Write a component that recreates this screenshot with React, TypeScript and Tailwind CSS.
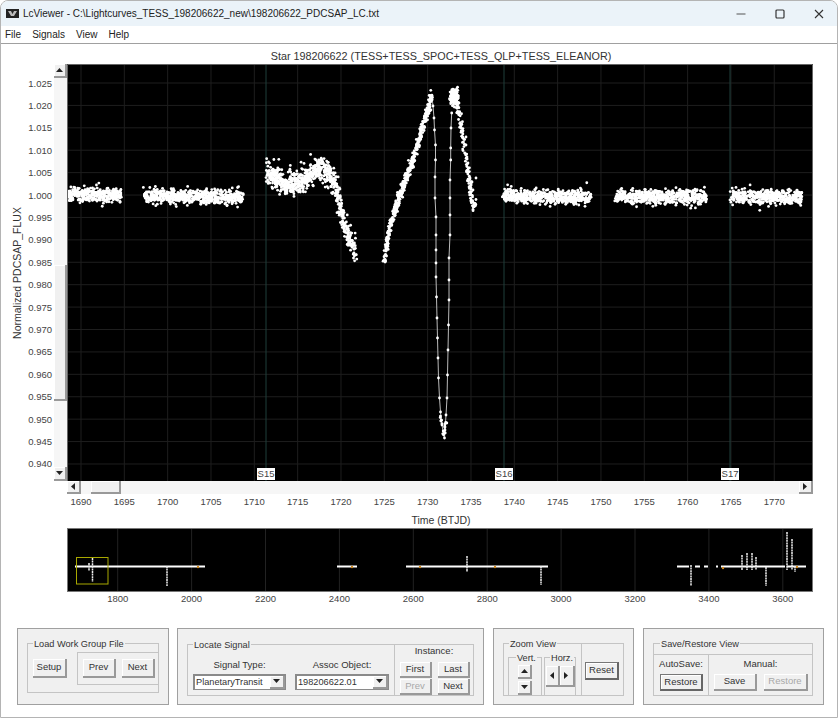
import type { ReactNode } from 'react';

type Pt = [number, number];

// small seeded generator so the star field stays the same on every render
let seed = 198206;
function rnd() {
  seed = (seed * 1664525 + 1013904223) % 4294967296;
  return seed / 4294967296;
}
function gauss() {
  return (rnd() + rnd() + rnd() + rnd() - 2) * 1.7;
}

function interp(line: Pt[], x: number) {
  for (let i = 0; i < line.length - 1; i++) {
    if (x >= line[i][0] && x <= line[i + 1][0]) {
      const t = (x - line[i][0]) / (line[i + 1][0] - line[i][0] || 1);
      return line[i][1] + (line[i + 1][1] - line[i][1]) * t;
    }
  }
  return line[line.length - 1][1];
}

function band(line: Pt[], sigma: number, perPx: number): Pt[] {
  const out: Pt[] = [];
  const start = line[0][0];
  const end = line[line.length - 1][0];
  const n = Math.round((end - start) * perPx);
  for (let i = 0; i < n; i++) {
    const x = start + rnd() * (end - start);
    // a few points stray further out, as in the real photometry
    const s = rnd() < 0.06 ? sigma * 1.9 : sigma;
    out.push([x + gauss() * 0.7, interp(line, x) + gauss() * s]);
  }
  return out;
}

const FLAT: Pt[][] = [
  [[68, 195], [121, 195]],
  [[144, 196], [243, 197]],
  [[503, 196], [591, 197]],
  [[616, 197], [707, 197]],
  [[730, 196], [802, 197]],
];

const HUMP: Pt[] = [
  [266, 172], [272, 174], [283, 184], [298, 184], [308, 176], [320, 167], [330, 174], [336, 188],
];
const HUMP_TAIL: Pt[] = [[336, 188], [341, 212], [347, 232], [351, 246], [356, 250]];

const RISE: Pt[] = [
  [384, 263], [390, 225], [403, 187], [413, 160], [423, 127], [432, 97],
];

const FALL: Pt[] = [
  [432, 97], [433, 106], [434, 118], [434.5, 130], [435.5, 145], [435.5, 160], [435, 177], [435, 198],
  [436, 217], [436, 235], [436, 250], [436, 263], [436, 277], [436.5, 297], [437, 318], [437.5, 338],
  [438, 358], [438.5, 378], [439.5, 398], [440.5, 412], [442, 425], [443.5, 434], [444.5, 438], [445, 430],
  [446, 415], [447, 398], [447.5, 375], [448, 350], [448.5, 325], [449, 300], [449, 280], [449, 258],
  [450, 235], [450, 215], [450, 198], [450, 180], [450.7, 160], [450.7, 148], [451, 128], [451.7, 113],
];

const LOBE: Pt[] = [
  [459, 112], [461, 125], [464, 142], [466, 157], [468, 173], [471, 192], [473, 205], [475, 204],
];
const LOBE_TOP: Pt[] = [[450, 98], [453, 96], [456, 97], [459, 104]];
const BOTTOM: Pt[] = [[440, 415], [444, 434], [446, 420]];

const plotDots: Pt[] = [
  ...FLAT.flatMap((s) => band(s, 3.4, 6)),
  ...band(HUMP, 5.8, 8),
  ...band(HUMP_TAIL, 6.5, 8),
  ...band(RISE, 3, 9),
  ...FALL,
  ...band(LOBE, 3.8, 7),
  ...band(LOBE_TOP, 4.6, 14),
  ...band(BOTTOM, 1.2, 3),
  [476, 178], [473, 190], [466, 137], [466, 145],
];

const OVERVIEW_FLAT: Pt[] = [
  [75, 205], [337, 357], [406, 548], [677, 689], [695, 700], [704, 708], [716, 718], [721, 785], [787, 806],
];
const OVERVIEW_SPIKES: [number, number, number][] = [
  [92.5, 558, 582], [89, 563, 571], [167, 566, 586], [467, 556, 572], [541, 566, 585],
  [691, 565, 586], [742, 555, 570], [747, 553, 570], [752, 553, 570], [756, 557, 570],
  [766, 567, 586], [787, 532, 570], [792, 539, 570], [795, 566, 572],
];
const OVERVIEW_ORANGE: Pt[] = [[198, 567], [352, 567], [420, 567], [495, 567], [723, 568], [797, 567]];

const YTICKS = Array.from({ length: 18 }, (_, i) => ({ y: 83 + i * 22.41, label: (1.025 - i * 0.005).toFixed(3) }));
const XTICKS = Array.from({ length: 17 }, (_, i) => ({ x: 81 + i * 43.33, label: String(1690 + i * 5) }));
const OTICKS = Array.from({ length: 10 }, (_, i) => ({ x: 117.7 + i * 73.9, label: String(1800 + i * 200) }));
const SECTORS = [
  { name: 'S15', x: 266 },
  { name: 'S16', x: 504 },
  { name: 'S17', x: 730 },
];

function Tri({ dir }: { dir: 'up' | 'down' | 'left' | 'right' }) {
  const pts = {
    up: '3.5,1 7,5 0,5',
    down: '0,1 7,1 3.5,5',
    left: '1,3.5 5,0 5,7',
    right: '1,0 5,3.5 1,7',
  }[dir];
  return (
    <svg width="7" height="7" viewBox="0 0 7 7" className="block">
      <polygon points={pts} fill="#222" />
    </svg>
  );
}

function Btn({ className, label, disabled, isDefault, children }: {
  className: string;
  label?: string;
  disabled?: boolean;
  isDefault?: boolean;
  children?: ReactNode;
}) {
  const look = isDefault
    ? 'border border-[#777] border-r-2 border-b-2 border-r-[#666] border-b-[#666] shadow-[inset_1px_1px_0_#fff]'
    : 'border-r-2 border-b-2 border-[#999] shadow-[inset_1px_1px_0_#fff]';
  return (
    <div className={`flex items-center justify-center bg-[#f0f0f0] text-[9.5px] shrink-0 ${look} ${disabled ? 'text-[#a8a8a8]' : 'text-[#333]'} ${className}`}>
      {label}
      {children}
    </div>
  );
}

function Select({ value, className }: { value: string; className: string }) {
  return (
    <div className={`flex h-[16px] items-stretch bg-white border border-[#8a8a8a] border-t-2 border-l-2 ${className}`}>
      <span className="flex-1 pl-[1px] text-[9.2px] leading-[13px] text-[#333] whitespace-nowrap">{value}</span>
      <Btn className="w-[15px]">
        <Tri dir="down" />
      </Btn>
    </div>
  );
}

function Legend({ text, className }: { text: string; className: string }) {
  return <span className={`absolute bg-[#f0f0f0] px-[1px] text-[9.2px] leading-[12px] text-[#333] whitespace-nowrap ${className}`}>{text}</span>;
}

function Panel({ className, children }: { className: string; children: ReactNode }) {
  return <div className={`h-[77px] shrink-0 border border-[#a0a0a0] bg-[#f0f0f0] ${className}`}>{children}</div>;
}

function PlotSvg() {
  return (
    <svg width="746" height="417" viewBox="67 64 746 417" className="block">
      <rect x="67" y="64" width="746" height="417" fill="#000" />
      {XTICKS.map((t) => (
        <line key={t.label} x1={t.x} x2={t.x} y1="64" y2="481" stroke="#1e1e1e" />
      ))}
      {YTICKS.map((t) => (
        <line key={t.label} x1="67" x2="813" y1={t.y} y2={t.y} stroke="#1e1e1e" />
      ))}
      {SECTORS.map((s) => (
        <line key={s.name} x1={s.x} x2={s.x} y1="64" y2="481" stroke="#1f3f3a" />
      ))}
      <polyline points={FALL.map((p) => p.join(',')).join(' ')} fill="none" stroke="#bbb" strokeWidth="1" />
      {plotDots.map((p, i) => (
        <circle key={i} cx={p[0]} cy={p[1]} r="1.4" fill="#fff" />
      ))}
      <path d="M67.5 481V64.5H812.5V481" fill="none" stroke="#666" />
    </svg>
  );
}

function OverviewSvg() {
  return (
    <svg width="746" height="64" viewBox="67 528 746 64" className="block">
      <rect x="67" y="528" width="746" height="64" fill="#000" />
      {OTICKS.map((t) => (
        <line key={t.label} x1={t.x} x2={t.x} y1="528" y2="592" stroke="#222" />
      ))}
      {OVERVIEW_FLAT.map(([a, b]) => (
        <line key={a} x1={a} x2={b} y1="566.5" y2="566.5" stroke="#fff" strokeWidth="2" />
      ))}
      {OVERVIEW_SPIKES.map(([x, a, b]) => (
        <line key={x} x1={x} x2={x} y1={a} y2={b} stroke="#eee" strokeWidth="1.5" strokeDasharray="2 0.6" />
      ))}
      {OVERVIEW_ORANGE.map(([x, y]) => (
        <circle key={x} cx={x} cy={y} r="1.2" fill="#d08a20" />
      ))}
      <rect x="76.5" y="557.5" width="31.5" height="26.5" fill="none" stroke="#a8a800" />
      <rect x="67.5" y="528.5" width="745" height="63" fill="none" stroke="#777" />
    </svg>
  );
}

export default function App() {
  return (
    <div className="w-[839px] h-[720px] bg-white font-['Liberation_Sans',sans-serif] overflow-hidden">
      <div className="w-[838px] h-[718px] border border-[#b4b4b4] rounded-t-lg overflow-hidden flex flex-col">
        {/* title bar */}
        <div className="h-[25px] shrink-0 bg-[#ebf3f9] flex items-center pl-[5px]">
          <svg width="13" height="9" viewBox="0 0 13 9" className="block mr-[4px]">
            <rect width="13" height="9" fill="#222" />
            <path d="M2 2h3l1.5 3L8 2h3L8 7H5z" fill="#bbb" />
          </svg>
          <span className="text-[10px] text-[#222] whitespace-nowrap">LcViewer - C:\Lightcurves_TESS_198206622_new\198206622_PDCSAP_LC.txt</span>
          <div className="ml-auto flex items-center gap-[29px] pr-[13px]">
            <svg width="10" height="10" viewBox="0 0 10 10"><path d="M0.5 5H9.5" stroke="#555" strokeWidth="1.2" /></svg>
            <svg width="10" height="10" viewBox="0 0 10 10"><rect x="1" y="1" width="8" height="8" rx="1" fill="none" stroke="#333" strokeWidth="1.2" /></svg>
            <svg width="10" height="10" viewBox="0 0 10 10"><path d="M1 1L9 9M9 1L1 9" stroke="#333" strokeWidth="1.1" /></svg>
          </div>
        </div>

        {/* menu */}
        <div className="h-[18px] shrink-0 flex items-center pl-[4px] gap-[11px] border-b border-[#a0a0a0] text-[10px] text-[#222]">
          <span>File</span>
          <span>Signals</span>
          <span>View</span>
          <span>Help</span>
        </div>

        <div className="h-[20px] shrink-0 pt-[4px] pl-[66px] w-[814px] flex items-center justify-center text-[10.8px] text-[#333] whitespace-nowrap">
          Star 198206622 (TESS+TESS_SPOC+TESS_QLP+TESS_ELEANOR)
        </div>

        {/* main plot row */}
        <div className="flex h-[417px] shrink-0">
          <svg width="53" height="417" viewBox="1 64 53 417" className="block">
            <text x="21" y="273" textAnchor="middle" transform="rotate(-90 21 273)" fontSize="10.5" fill="#333">Normalized PDCSAP_FLUX</text>
            {YTICKS.map((t) => (
              <text key={t.label} x="52" y={t.y + 3.5} textAnchor="end" fontSize="9.5" fill="#444">{t.label}</text>
            ))}
          </svg>
          <div className="w-[13px] flex flex-col bg-[#f6f6f6]">
            <Btn className="h-[14px] w-[13px]"><Tri dir="up" /></Btn>
            <div className="flex-1">
              <div className="mt-[187px] h-[136px] w-[13px] border-r-2 border-b-2 border-[#999] bg-[#f0f0f0] shadow-[inset_1px_1px_0_#fff]" />
            </div>
            <Btn className="h-[14px] w-[13px]"><Tri dir="down" /></Btn>
          </div>
          <div className="relative w-[746px]">
            <PlotSvg />
            {SECTORS.map((s) => (
              <span
                key={s.name}
                className={`absolute top-[404px] h-[12px] w-[18px] bg-white text-center text-[9.5px] leading-[12px] text-[#444] ${
                  s.name === 'S15' ? 'left-[190px]' : s.name === 'S16' ? 'left-[428px]' : 'left-[654px]'
                }`}
              >
                {s.name}
              </span>
            ))}
          </div>
        </div>

        {/* horizontal scroll bar */}
        <div className="h-[13px] shrink-0 ml-[66px] w-[746px] flex bg-[#f6f6f6]">
          <Btn className="w-[14px] h-[13px]"><Tri dir="left" /></Btn>
          <div className="flex-1">
            <div className="ml-[10px] w-[30px] h-[13px] border-r-2 border-b-2 border-[#999] bg-[#f0f0f0] shadow-[inset_1px_1px_0_#fff]" />
          </div>
          <Btn className="w-[14px] h-[13px]"><Tri dir="right" /></Btn>
        </div>

        <svg width="800" height="18" viewBox="1 494 800 18" className="block shrink-0">
          {XTICKS.map((t) => (
            <text key={t.label} x={t.x} y="505" textAnchor="middle" fontSize="9.5" fill="#444">{t.label}</text>
          ))}
        </svg>
        <div className="h-[16px] shrink-0 pl-[66px] w-[814px] text-center text-[10.5px] leading-[16px] text-[#333]">Time (BTJD)</div>

        <div className="h-[64px] shrink-0 ml-[66px]">
          <OverviewSvg />
        </div>
        <svg width="800" height="16" viewBox="1 592 800 16" className="block shrink-0">
          {OTICKS.map((t) => (
            <text key={t.label} x={t.x} y="602" textAnchor="middle" fontSize="9.5" fill="#444">{t.label}</text>
          ))}
        </svg>

        {/* control panels */}
        <div className="mt-[20px] ml-[16px] flex">
          <Panel className="w-[152px] pl-[9px] pt-[14px]">
            <div className="relative w-[132px] h-[50px] border border-[#c4c4c4] flex">
              <Legend text="Load Work Group File" className="left-[5px] top-[-6px]" />
              <Btn className="ml-[5px] mt-[15px] w-[34px] h-[19px]" label="Setup" />
              <div className="ml-[10px] mt-[8px] h-[33px] w-[82px] border border-[#c4c4c4] border-r-0 flex">
                <Btn className="ml-[5px] mt-[6px] w-[33px] h-[19px]" label="Prev" />
                <Btn className="ml-[6px] mt-[6px] w-[33px] h-[19px]" label="Next" />
              </div>
            </div>
          </Panel>

          <Panel className="ml-[8px] w-[307px] pl-[9px] pt-[15px]">
            <div className="relative w-[287px] h-[52px] border border-[#c4c4c4] flex">
              <Legend text="Locate Signal" className="left-[5px] top-[-6px]" />
              <div className="w-[207px] border-r border-[#c4c4c4] flex pl-[5px] pt-[13px]">
                <div className="w-[93px]">
                  <div className="h-[14px] text-center text-[9.5px] leading-[14px] text-[#333]">Signal Type:</div>
                  <Select value="PlanetaryTransit" className="mt-[2px] w-[93px]" />
                </div>
                <div className="ml-[9px] w-[94px]">
                  <div className="h-[14px] text-center text-[9.5px] leading-[14px] text-[#333]">Assoc Object:</div>
                  <Select value="198206622.01" className="mt-[2px] w-[94px]" />
                </div>
              </div>
              <div className="flex-1">
                <div className="h-[12px] text-center text-[9.5px] leading-[12px] text-[#333]">Instance:</div>
                <div className="mt-[5px] ml-[5px] grid grid-cols-[32px_32px] gap-x-[6px] gap-y-[1px]">
                  <Btn className="h-[16px]" label="First" />
                  <Btn className="h-[16px]" label="Last" />
                  <Btn className="h-[16px]" label="Prev" disabled />
                  <Btn className="h-[16px]" label="Next" />
                </div>
              </div>
            </div>
          </Panel>

          <Panel className="ml-[9px] w-[141px] pl-[9px] pt-[14px]">
            <div className="relative w-[121px] h-[53px] border border-[#c4c4c4] flex">
              <Legend text="Zoom View" className="left-[5px] top-[-6px]" />
              <div className="w-[78px] border-r border-[#c4c4c4] flex pl-[4px] pt-[13px]">
                <div className="relative w-[34px] h-[38px] border border-b-0 border-[#c4c4c4]">
                  <Legend text="Vert." className="left-[7px] top-[-6px]" />
                  <Btn className="ml-[9px] mt-[7px] w-[14px] h-[14px]"><Tri dir="up" /></Btn>
                  <Btn className="ml-[9px] mt-[2px] w-[14px] h-[14px]"><Tri dir="down" /></Btn>
                </div>
                <div className="relative ml-[2px] w-[32px] h-[38px] border border-b-0 border-[#c4c4c4] flex items-start">
                  <Legend text="Horz." className="left-[5px] top-[-6px]" />
                  <Btn className="ml-[1px] mt-[8px] w-[14px] h-[21px]"><Tri dir="left" /></Btn>
                  <Btn className="mt-[8px] w-[15px] h-[21px]"><Tri dir="right" /></Btn>
                </div>
              </div>
              <div className="pl-[3px] pt-[18px]">
                <Btn className="w-[34px] h-[18px]" label="Reset" isDefault />
              </div>
            </div>
          </Panel>

          <Panel className="ml-[9px] w-[181px] pl-[9px] pt-[14px]">
            <div className="relative w-[160px] h-[53px] border border-[#c4c4c4]">
              <Legend text="Save/Restore View" className="left-[6px] top-[-6px]" />
              <div className="h-[11px] border-b border-[#c4c4c4]" />
              <div className="flex h-[40px]">
                <div className="w-[55px] border-r border-[#c4c4c4]">
                  <div className="mt-[2px] h-[14px] text-center text-[9.5px] leading-[14px] text-[#333]">AutoSave:</div>
                  <Btn className="ml-[6px] mt-[3px] w-[43px] h-[17px]" label="Restore" isDefault />
                </div>
                <div className="flex-1">
                  <div className="mt-[2px] h-[14px] text-center text-[9.5px] leading-[14px] text-[#333]">Manual:</div>
                  <div className="mt-[3px] ml-[5px] flex gap-[7px]">
                    <Btn className="w-[43px] h-[17px]" label="Save" />
                    <Btn className="w-[44px] h-[17px]" label="Restore" disabled />
                  </div>
                </div>
              </div>
            </div>
          </Panel>
        </div>
      </div>
    </div>
  );
}
